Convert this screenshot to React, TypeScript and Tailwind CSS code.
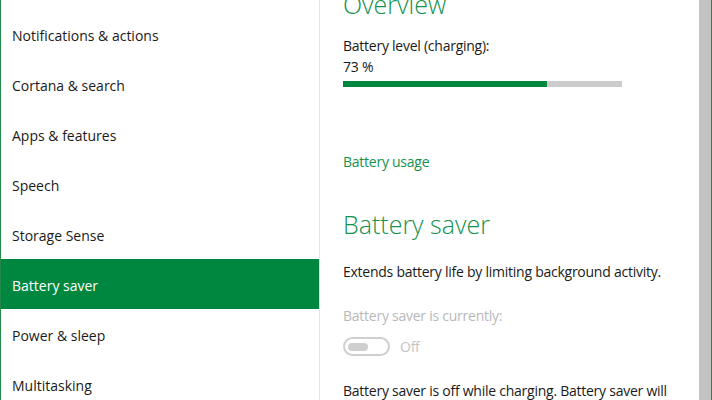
const items = [
  'Notifications & actions',
  'Cortana & search',
  'Apps & features',
  'Speech',
  'Storage Sense',
  'Battery saver',
  'Power & sleep',
  'Multitasking',
];

const font = { fontFamily: '"Open Sans", "Noto Sans", sans-serif' };

export default function App() {
  const level = 73;
  return (
    <div
      className="w-[712px] h-[400px] flex overflow-hidden bg-white border-l border-r border-[#1f8a4c] text-[#1a1a1a]"
      style={font}
    >
      {/* Sidebar */}
      <div className="w-[319px] shrink-0 flex flex-col pt-[9px] border-r border-[#e3e3e3] overflow-hidden">
        {items.map((label) => {
          const active = label === 'Battery saver';
          return (
            <div
              key={label}
              className={`h-[50px] shrink-0 flex items-center pl-[11px] pt-[3px] text-[14px] ${
                active ? 'bg-[#00873f] text-white -mr-px' : 'text-[#1a1a1a]'
              }`}
            >
              {label}
            </div>
          );
        })}
      </div>

      {/* Content */}
      <div className="flex-1 pl-[23px] overflow-hidden tracking-[-0.25px]">
        <div className="text-[25px] font-light text-[#16924d] leading-none -mt-[8px] tracking-normal">Overview</div>
        <div className="mt-[18px] text-[14px] leading-[21px]">Battery level (charging):</div>
        <div className="text-[14px] leading-[21px]">{level} %</div>
        <div className="mt-[4px] w-[279px] h-[6px] bg-[#cccccc]">
          <div className="h-full bg-[#00873f]" style={{ width: `${level}%` }} />
        </div>
        <div className="mt-[64px] text-[14px] text-[#16924d]">Battery usage</div>
        <div className="mt-[40px] text-[25px] font-light text-[#16924d] leading-none tracking-normal">Battery saver</div>
        <div className="mt-[24px] text-[14px]">Extends battery life by limiting background activity.</div>
        <div className="mt-[23px] text-[14px] text-[#b9b9b9]">Battery saver is currently:</div>
        <div className="mt-[10px] flex items-center gap-[10px]">
          <div className="w-[47px] h-[19px] rounded-full border-2 border-[#cfcfcf] flex items-center pl-[3px]">
            <div className="w-[20px] h-[8px] rounded-full bg-[#cfcfcf]" />
          </div>
          <span className="text-[14px] text-[#c4c4c4]">Off</span>
        </div>
        <div className="mt-[23px] text-[14px] whitespace-nowrap">
          Battery saver is off while charging. Battery saver will
        </div>
      </div>

      {/* Scrollbar */}
      <div className="w-[12px] shrink-0 bg-[#c2c2c2]" />
    </div>
  );
}
